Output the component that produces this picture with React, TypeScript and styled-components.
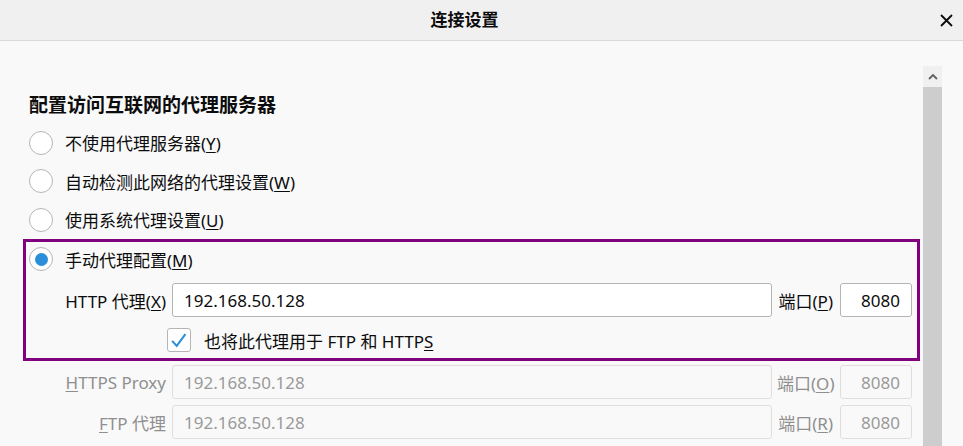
import styled, { createGlobalStyle } from 'styled-components';

const GlobalStyle = createGlobalStyle`
  html, body {
    margin: 0;
    padding: 0;
    background: #f9f9f9;
  }
  body {
    font-family: "Noto Sans", "Noto Sans CJK SC", sans-serif;
    color: #0c0c0d;
  }
`;

const Window = styled.div`
  width: 963px;
  height: 446px;
  display: flex;
  flex-direction: column;
  overflow: hidden;
  background: #f9f9f9;
`;

const TitleBar = styled.div`
  height: 40px;
  flex-shrink: 0;
  display: flex;
  align-items: center;
  background: #f0f0f0;
  border-bottom: 1px solid #d9d9d9;
`;

const Title = styled.div`
  flex: 1;
  text-align: center;
  font-size: 17px;
  font-weight: 700;
  line-height: 40px;
`;

const CloseButton = styled.div`
  width: 34px;
  height: 40px;
  display: flex;
  align-items: center;
  justify-content: center;
`;

const Body = styled.div`
  flex: 1;
  min-height: 0;
  display: flex;
  padding: 25px 21px 0 29px;
`;

const Content = styled.div`
  flex: 1;
  display: flex;
  flex-direction: column;
`;

const Scrollbar = styled.div`
  width: 19px;
  margin-left: 11px;
  display: flex;
  flex-direction: column;
`;

const ScrollArrow = styled.div`
  height: 21px;
  background: #f0f0f0;
  display: flex;
  align-items: center;
  justify-content: center;
`;

const ScrollThumb = styled.div`
  flex: 1;
  background: #cdcdcd;
`;

const Heading = styled.div`
  margin-top: 18px;
  height: 39.5px;
  display: flex;
  align-items: center;
  font-size: 19px;
  font-weight: 700;
`;

const RadioRow = styled.div<{ $compact?: boolean }>`
  height: ${({ $compact }) => ($compact ? '34px' : '38.5px')};
  display: flex;
  align-items: center;
  gap: 12px;
  font-size: 17px;
`;

const Radio = styled.span<{ $checked?: boolean }>`
  width: 24px;
  height: 24px;
  box-sizing: border-box;
  border-radius: 50%;
  border: 1px solid #b5b5b5;
  background: #fff;
  display: flex;
  align-items: center;
  justify-content: center;
  flex-shrink: 0;

  &::after {
    content: '';
    display: ${({ $checked }) => ($checked ? 'block' : 'none')};
    width: 13px;
    height: 13px;
    border-radius: 50%;
    background: #2a8fd8;
  }
`;

const Key = styled.span`
  text-decoration: underline;
  text-underline-offset: 2px;
`;

const Highlight = styled.div`
  border: 3px solid #800080;
  margin: 0 -8px 0 -6px;
  padding: 0 5px 6px 3px;
`;

const FieldRow = styled.div<{ $gap: number }>`
  margin-top: ${({ $gap }) => $gap}px;
  height: 34px;
  display: flex;
  align-items: center;
  font-size: 17px;
`;

const FieldLabel = styled.span<{ $disabled?: boolean }>`
  width: 137px;
  flex-shrink: 0;
  text-align: right;
  margin-right: 6px;
  white-space: nowrap;
  color: ${({ $disabled }) => ($disabled ? '#8f8f8f' : '#0c0c0d')};
`;

const TextBox = styled.div<{ $disabled?: boolean; $port?: boolean }>`
  box-sizing: border-box;
  height: 34px;
  min-width: 0;
  ${({ $port }) => ($port ? 'width: 72px; flex-shrink: 0;' : 'flex: 1;')}
  border: 1px solid ${({ $disabled }) => ($disabled ? '#dedede' : '#b5b5b5')};
  border-radius: 3px;
  background: ${({ $disabled }) => ($disabled ? '#f9f9f9' : '#fff')};
  color: ${({ $disabled }) => ($disabled ? '#9a9a9a' : '#0c0c0d')};
  display: flex;
  align-items: center;
  justify-content: ${({ $port }) => ($port ? 'flex-end' : 'flex-start')};
  padding: 0 11px;
  white-space: nowrap;
`;

const PortLabel = styled.span<{ $disabled?: boolean }>`
  width: 56px;
  flex-shrink: 0;
  text-align: right;
  margin: 0 7px 0 5px;
  white-space: nowrap;
  color: ${({ $disabled }) => ($disabled ? '#8f8f8f' : '#0c0c0d')};
`;

const CheckRow = styled.div`
  margin-top: 11px;
  height: 24px;
  display: flex;
  align-items: center;
  padding-left: 138px;
  gap: 13px;
  font-size: 17px;
`;

const CheckBox = styled.span`
  width: 24px;
  height: 24px;
  box-sizing: border-box;
  border: 1px solid #b5b5b5;
  border-radius: 3px;
  background: #fff;
  display: flex;
  align-items: center;
  justify-content: center;
`;

const radios = [
  { text: '不使用代理服务器', key: 'Y' },
  { text: '自动检测此网络的代理设置', key: 'W' },
  { text: '使用系统代理设置', key: 'U' },
];

const App = () => {
  return (
    <>
      <GlobalStyle />
      <Window>
        <TitleBar>
          <Title>连接设置</Title>
          <CloseButton>
            <svg width="13" height="13" viewBox="0 0 13 13">
              <path d="M1 1 L12 12 M12 1 L1 12" stroke="#0c0c0d" strokeWidth="1.8" />
            </svg>
          </CloseButton>
        </TitleBar>
        <Body>
          <Content>
            <Heading>配置访问互联网的代理服务器</Heading>
            {radios.map((r) => (
              <RadioRow key={r.key}>
                <Radio />
                <span>
                  {r.text}(<Key>{r.key}</Key>)
                </span>
              </RadioRow>
            ))}
            <Highlight>
              <RadioRow $compact>
                <Radio $checked />
                <span>
                  手动代理配置(<Key>M</Key>)
                </span>
              </RadioRow>
              <FieldRow $gap={7}>
                <FieldLabel>
                  HTTP 代理(<Key>X</Key>)
                </FieldLabel>
                <TextBox>192.168.50.128</TextBox>
                <PortLabel>
                  端口(<Key>P</Key>)
                </PortLabel>
                <TextBox $port>8080</TextBox>
              </FieldRow>
              <CheckRow>
                <CheckBox>
                  <svg width="24" height="24" viewBox="0 0 24 24">
                    <path
                      d="M4.5 13 L9.5 18.5 L19 5.5"
                      fill="none"
                      stroke="#2a8fd8"
                      strokeWidth="2.2"
                    />
                  </svg>
                </CheckBox>
                <span>
                  也将此代理用于 FTP 和 HTTP<Key>S</Key>
                </span>
              </CheckRow>
            </Highlight>
            <FieldRow $gap={4}>
              <FieldLabel $disabled>
                <Key>H</Key>TTPS Proxy
              </FieldLabel>
              <TextBox $disabled>192.168.50.128</TextBox>
              <PortLabel $disabled>
                端口(<Key>O</Key>)
              </PortLabel>
              <TextBox $disabled $port>
                8080
              </TextBox>
            </FieldRow>
            <FieldRow $gap={6}>
              <FieldLabel $disabled>
                <Key>F</Key>TP 代理
              </FieldLabel>
              <TextBox $disabled>192.168.50.128</TextBox>
              <PortLabel $disabled>
                端口(<Key>R</Key>)
              </PortLabel>
              <TextBox $disabled $port>
                8080
              </TextBox>
            </FieldRow>
          </Content>
          <Scrollbar>
            <ScrollArrow>
              <svg width="10" height="7" viewBox="0 0 10 7">
                <path d="M1 6 L5 2 L9 6" fill="none" stroke="#606060" strokeWidth="1.8" />
              </svg>
            </ScrollArrow>
            <ScrollThumb />
          </Scrollbar>
        </Body>
      </Window>
    </>
  );
};

export default App;
